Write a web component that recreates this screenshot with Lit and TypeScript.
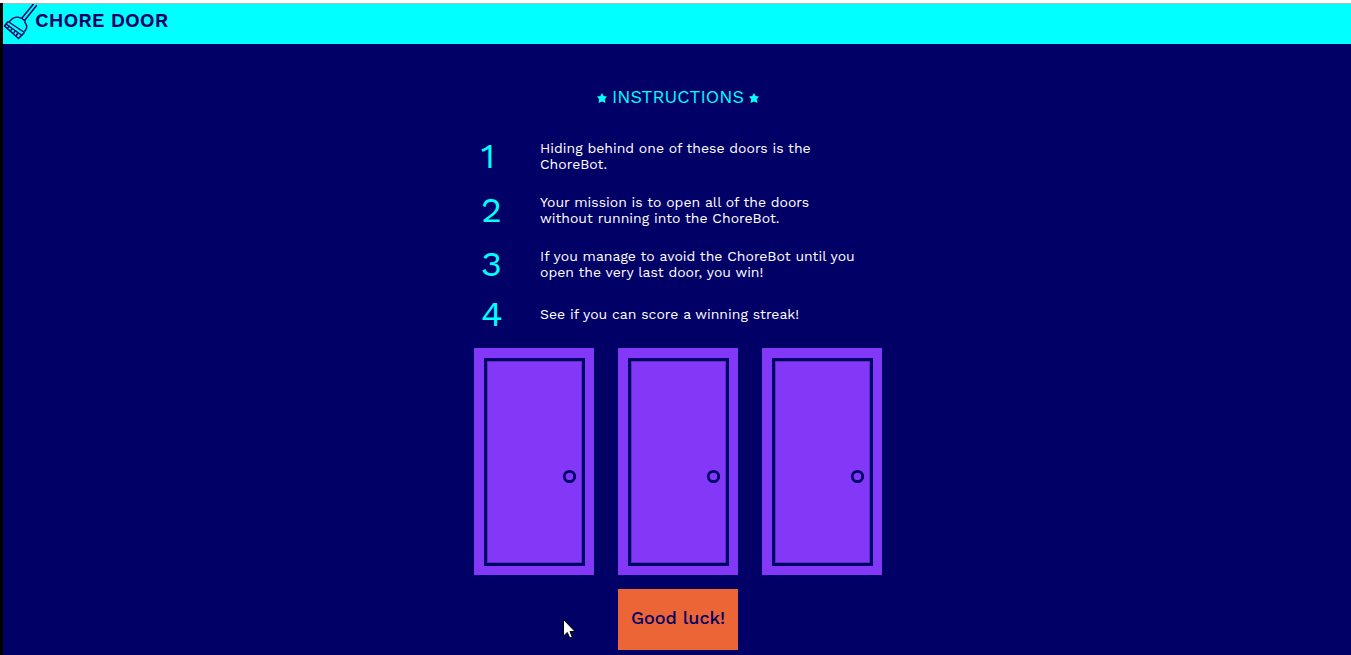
import { LitElement, html, css, svg } from "lit";
import { customElement, property, state } from "lit/decorators.js";

const INSTRUCTIONS = [
  "Hiding behind one of these doors is the ChoreBot.",
  "Your mission is to open all of the doors without running into the ChoreBot.",
  "If you manage to avoid the ChoreBot until you open the very last door, you win!",
  "See if you can score a winning streak!",
];

@customElement("star-icon")
class StarIcon extends LitElement {
  static styles = css`
    :host { display: block; width: 10px; height: 10px; }
    .star { display: block; width: 100%; height: 100%; fill: currentColor; }
  `;
  render() {
    return html`<svg class="star" viewBox="0 0 10 10" aria-hidden="true">
      ${svg`<path d="M5 0 L6.7 3 L10 3.5 L7.8 6.2 L8.4 10 L5 8.5 L1.6 10 L2.2 6.2 L0 3.5 L3.3 3 Z" />`}
    </svg>`;
  }
}

@customElement("chore-door")
class ChoreDoor extends LitElement {
  static styles = css`
    :host { display: block; }
    .door { display: block; padding: 0; border: 0; background: none; cursor: pointer; }
    .art { display: block; width: 120px; height: 227px; }
  `;
  @property({ type: Number }) number = 1;
  render() {
    return html`<button class="door" type="button" aria-label="Door ${this.number}">
      <svg class="art" viewBox="0 0 120 227" aria-hidden="true">
        <rect width="120" height="227" fill="#8338f7" />
        <rect x="11.5" y="11.5" width="98" height="205" fill="none" stroke="#010066" stroke-width="3" />
        <rect x="13.5" y="13.5" width="94" height="201" fill="none" stroke="#6029c8" stroke-width="1" />
        <circle cx="95.5" cy="128.5" r="5.2" fill="#8338f7" stroke="#010066" stroke-width="2.8" />
      </svg>
    </button>`;
  }
}

@customElement("app-root")
class AppRoot extends LitElement {
  static styles = css`
    :host {
      display: flex;
      flex-direction: column;
      min-height: 100vh;
      box-sizing: border-box;
      border-top: 3px solid #fff;
      background: #000;
      padding-left: 3px;
      font-family: "Work Sans", Inter, sans-serif;
      color: #fff;
    }
    .header {
      display: flex;
      align-items: flex-start;
      box-sizing: border-box;
      height: 41px;
      background: #00ffff;
      border-top: 1px solid #a5b8b8;
      color: #010066;
    }
    .broom { display: block; width: 34px; height: 36px; margin-right: -2px; flex: none; }
    .brand { margin: 0; font-size: 20px; line-height: 32px; font-weight: 600; }
    .main {
      flex: 1;
      display: flex;
      flex-direction: column;
      align-items: center;
      padding: 40px 0 5px 2px;
      background: #010066;
    }
    .title {
      display: flex;
      align-items: center;
      gap: 5px;
      margin: 0 0 19px;
      color: #00ffff;
      font-size: 18px;
      line-height: 26px;
      font-weight: 400;
    }
    .star-mark { margin-top: 2px; }
    .content { width: 408px; max-width: 100%; }
    .steps { list-style: none; margin: 0 0 11px; padding: 0 8px; }
    .step { display: grid; grid-template-columns: 58px 1fr; align-items: center; }
    .number { margin-left: -1px; color: #00ffff; font-size: 36px; line-height: 46px; }
    .text { margin: 11px 0; max-width: 325px; font-size: 14px; line-height: 16px; }
    .doors { display: flex; justify-content: space-between; margin-bottom: 14px; }
    .start {
      display: block;
      width: 120px;
      height: 61px;
      margin: 0 auto;
      padding: 0 0 4px;
      border: 0;
      background: #eb6536;
      color: #010066;
      font: 500 18px/24px "Work Sans", Inter, sans-serif;
      white-space: nowrap;
      cursor: pointer;
    }
    .pointer { position: absolute; left: 563px; top: 619px; width: 13px; height: 21px; pointer-events: none; }
  `;

  @state() private message = "Good luck!";

  render() {
    return html`
      <header class="header">
        <svg class="broom" viewBox="0 0 34 36" fill="none" stroke="#010066" stroke-width="1.4" stroke-linejoin="round" aria-hidden="true">
          <path d="M30.500 0 L18.500 14.500 M34 1 L21.500 16.500" stroke-width="1.500" />
          <path d="M18.500 14 L22.500 17.500" />
          <path d="M18.500 14.500 Q13 11.500 9 15 L6 18 M21.500 27.500 L23 25.500 Q25 22 21.500 18" />
          <path d="M5 17.500 L21.500 28.500 M3 20 L19 31.500" />
          <path d="M5 17.500 L1.500 22 L15.500 34.500 L21.500 28.500" stroke-width="1.500" />
          <path d="M4.500 24 L6.500 22 M7.500 27 L9 24.500 M10.500 29.500 L12 27 M13 32 L15 29" />
        </svg>
        <h1 class="brand">CHORE DOOR</h1>
      </header>
      <main class="main">
        <h2 class="title"><star-icon class="star-mark"></star-icon>INSTRUCTIONS<star-icon class="star-mark"></star-icon></h2>
        <div class="content">
          <ol class="steps">
            ${INSTRUCTIONS.map(
              (text, i) => html`<li class="step">
                <span class="number">${i + 1}</span>
                <p class="text">${text}</p>
              </li>`
            )}
          </ol>
          <div class="doors">
            ${[1, 2, 3].map((n) => html`<chore-door .number=${n}></chore-door>`)}
          </div>
          <button class="start" type="button">${this.message}</button>
        </div>
      </main>
      <svg class="pointer" viewBox="0 0 13 21" aria-hidden="true">
        <path d="M.5 .5 V17 L4.300 13.500 L6.800 19 L9.300 18 L7 12.500 H12 Z" fill="#fff" stroke="#000" stroke-width="1" />
      </svg>
    `;
  }
}
